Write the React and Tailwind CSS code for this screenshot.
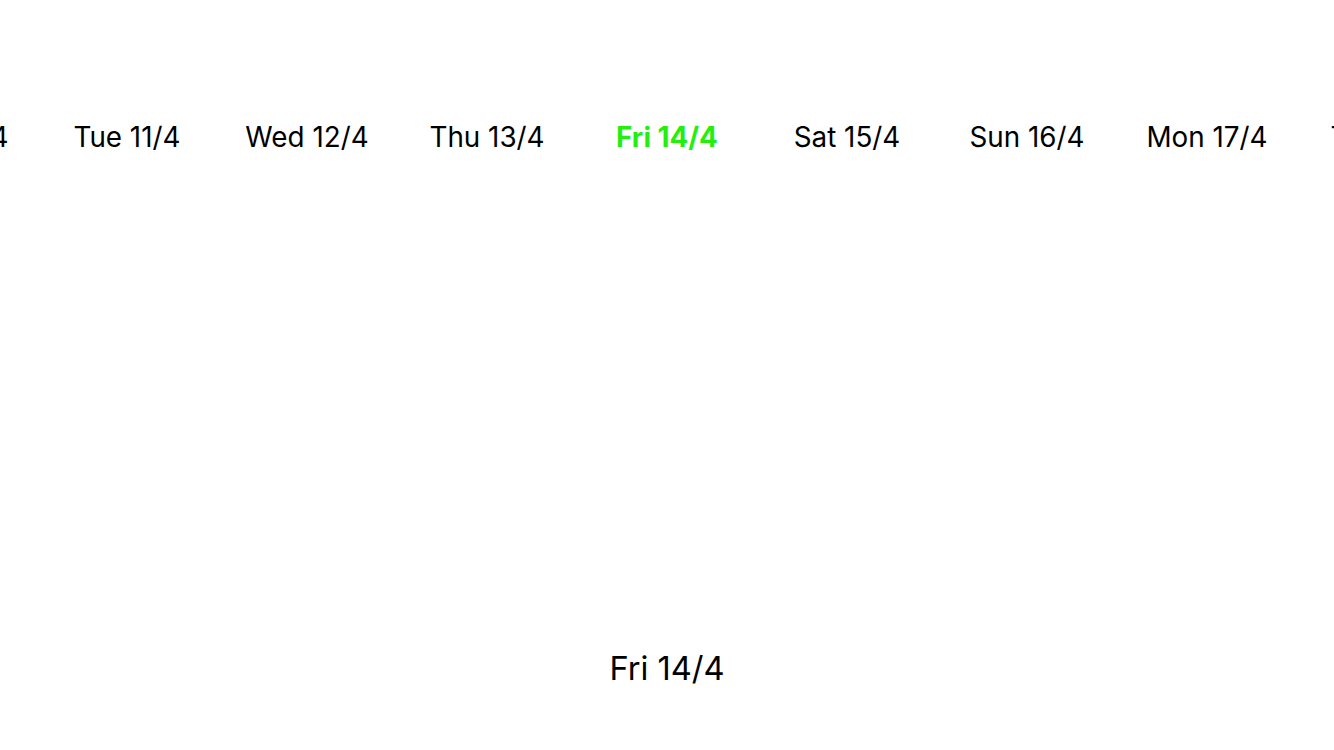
const days = [
  "Mon 10/4",
  "Tue 11/4",
  "Wed 12/4",
  "Thu 13/4",
  "Fri 14/4",
  "Sat 15/4",
  "Sun 16/4",
  "Mon 17/4",
  "Tue 18/4",
];

const App = () => {
  const selected = "Fri 14/4";

  return (
    <div
      className="w-[1334px] h-[750px] bg-white overflow-hidden flex flex-col text-black"
      style={{ fontFamily: "Inter, 'Noto Sans', sans-serif" }}
    >
      {/* Day strip, scrolled so the selected day sits in the middle */}
      <div className="pt-[118px] flex -ml-[143px]">
        {days.map((day) => (
          <div
            key={day}
            className="w-[180px] shrink-0 flex justify-center h-[40px] items-center"
          >
            <span
              className={`text-[27.8px] leading-none whitespace-nowrap ${
                day === selected ? "font-bold text-[#22f00c]" : ""
              }`}
            >
              {day}
            </span>
          </div>
        ))}
      </div>

      <div className="flex-1"></div>

      {/* Selected day */}
      <div className="flex justify-center pb-[62px]">
        <span className="text-[32.6px] leading-[40px]">{selected}</span>
      </div>
    </div>
  );
};

export default App;
